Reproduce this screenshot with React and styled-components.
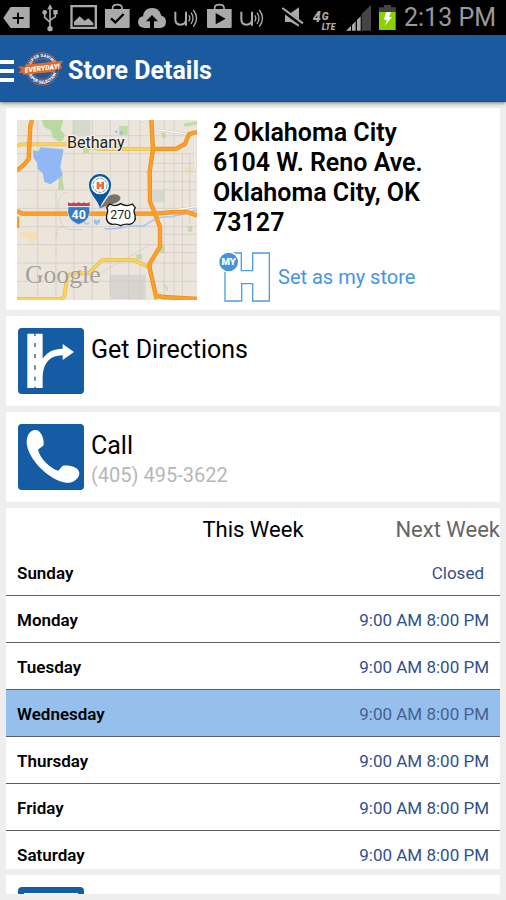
import React, {useState} from 'react';
import styled, {createGlobalStyle} from 'styled-components';

const GlobalStyle = createGlobalStyle`
    * {
        box-sizing: border-box;
    }

    body {
        margin: 0;
        background: #eeeeee;
        font-family: Roboto, "Liberation Sans", sans-serif;
        color: #000000;
    }

    button {
        margin: 0;
        padding: 0;
        border: none;
        background: none;
        font-family: inherit;
        cursor: pointer;
    }
`;

const Page = styled.div`
    display: flex;
    flex-direction: column;
    height: 100vh;
    overflow: hidden;
`;

const StatusBar = styled.div`
    flex: none;
    display: flex;
    align-items: center;
    gap: 8px;
    height: 35px;
    padding: 0 10px 0 3px;
    background: #000000;
    color: #a9aba9;
`;

const StatusIcon = styled.svg`
    flex: none;
    width: ${(props) => props.$width}px;
    height: 35px;
    fill: currentColor;
    margin-left: ${(props) => (props.$push ? 'auto' : '0')};
`;

const Clock = styled.time`
    font-size: 25px;
    line-height: 35px;
    color: #999999;
`;

const AppHeader = styled.header`
    flex: none;
    position: relative;
    display: flex;
    align-items: center;
    height: 67px;
    padding-top: 5px;
    background: #1c5aa0;
    border-bottom: 1px solid #0f4f9c;
    box-shadow: 0 1px 4px rgba(0, 0, 0, 0.5);
    color: #ffffff;
`;

const MenuButton = styled.button`
    display: flex;
    flex-direction: column;
    gap: 5px;
    width: 14px;
`;

const MenuBar = styled.span`
    height: 4px;
    background: #ffffff;
`;

const HeaderLogo = styled.svg`
    width: 46px;
    height: 36px;
    margin: 0 4px 4px;
`;

const Title = styled.h1`
    margin: 0;
    font-size: 25px;
    line-height: 30px;
    font-weight: 700;
`;

const Content = styled.main`
    flex: 1;
    min-height: 0;
    display: flex;
    flex-direction: column;
    gap: 6px;
    padding: 6px;
`;

const Card = styled.section`
    flex: none;
    background: #ffffff;
`;

const StoreCard = styled(Card)`
    display: flex;
    gap: 16px;
    padding: 10px 11px 8px;
`;

const Map = styled.svg`
    flex: none;
    width: 180px;
    height: 180px;
    margin-top: 2px;
`;

const StoreInfo = styled.div`
    flex: 1;
    min-width: 0;
`;

const Address = styled.address`
    max-width: 240px;
    margin-bottom: 14px;
    font-size: 25px;
    line-height: 30px;
    font-style: normal;
    font-weight: 600;
`;

const SetStoreButton = styled.button`
    display: flex;
    align-items: center;
    gap: 8px;
    margin-left: 6px;
    font-size: 20px;
    line-height: 24px;
    color: #4595df;
`;

const StoreIcon = styled.svg`
    width: 51px;
    height: 50px;
`;

const ActionCard = styled(Card)`
    padding: 12px;
`;

const LastCard = styled(Card)`
    flex: 0 1 90px;
    min-height: 0;
    padding: 12px 12px 0;
    overflow: hidden;
`;

const ActionLink = styled.a`
    display: flex;
    gap: 7px;
    color: inherit;
    text-decoration: none;
`;

const ActionIcon = styled.svg`
    flex: none;
    width: 66px;
    height: 66px;
`;

const ActionText = styled.div`
    padding-top: 7px;
`;

const ActionTitle = styled.div`
    font-size: 25px;
    line-height: 30px;
`;

const ActionDetail = styled.div`
    font-size: 20px;
    line-height: 28px;
    color: #b7b7b7;
`;

const WeekTabs = styled.div`
    display: grid;
    grid-template-columns: 1fr auto 1fr;
    height: 41px;
    padding-top: 2px;
`;

const WeekTab = styled.button`
    grid-column: ${(props) => props.$column};
    justify-self: end;
    font-size: 22px;
    line-height: 28px;
    color: ${(props) => (props.$active ? '#000000' : '#666666')};
`;

const HoursTable = styled.table`
    width: 100%;
    border-spacing: 0;
    font-size: 17px;
    line-height: 22px;
`;

const HoursRow = styled.tr`
    background: ${(props) => (props.$today ? '#95bfec' : 'transparent')};
    color: ${(props) => (props.$today ? '#466191' : '#30508c')};

    th, td {
        padding: 13px 11px 11px;
        border-bottom: 1px solid #596066;
    }

    &:last-child th, &:last-child td {
        padding-bottom: 3px;
        border-bottom: none;
    }
`;

const Day = styled.th`
    text-align: left;
    font-weight: 600;
    color: #000000;
`;

const Hours = styled.td`
    text-align: right;

    && {
        padding-right: ${(props) => (props.$closed ? '16px' : '11px')};
    }
`;

const OPEN_HOURS = '9:00 AM 8:00 PM';

const week = [
    {day: 'Sunday', hours: 'Closed'},
    {day: 'Monday', hours: OPEN_HOURS},
    {day: 'Tuesday', hours: OPEN_HOURS},
    {day: 'Wednesday', hours: OPEN_HOURS, today: true},
    {day: 'Thursday', hours: OPEN_HOURS},
    {day: 'Friday', hours: OPEN_HOURS},
    {day: 'Saturday', hours: OPEN_HOURS}
];

const SoundIcon = () => (
    <StatusIcon $width={25} viewBox="519 0 75 105" aria-hidden="true">
        <g fill="none" stroke="currentColor" strokeWidth="6">
            <path d="M523 35 V58 Q523 74 538 74 Q555 74 555 58 V35 M555 55 V77" />
            <path d="M563 46 Q570 54 563 64 M570 38 Q582 54 570 72 M577 30 Q596 54 577 80" strokeWidth="4" />
        </g>
    </StatusIcon>
);

const StatusIcons = () => (
    <>
        <StatusIcon $width={27} viewBox="9 0 81 105" aria-hidden="true">
            <path d="M10 54 L32 21 H89 V84 H32Z" />
            <path d="M54 38 V71 M38 54 H71" stroke="#000000" strokeWidth="6" />
        </StatusIcon>
        <StatusIcon $width={24} viewBox="114 0 72 105" aria-hidden="true">
            <path d="M150 22 V86 M134 40 V52 L150 67 M166 40 V50 L150 61" fill="none" stroke="currentColor" strokeWidth="5" />
            <path d="M150 12 L158 28 H142Z" />
            <circle cx="150" cy="86" r="8" />
            <circle cx="134" cy="37" r="7" />
            <rect x="160" y="30" width="13" height="13" />
        </StatusIcon>
        <StatusIcon $width={27} viewBox="210 0 81 105" aria-hidden="true">
            <path d="M211 15 H291 V87 H211Z M218 22 V80 H284 V22Z" fillRule="evenodd" />
            <path d="M222 76 V65 L239 49 L254 62 L265 55 L280 69 V76Z" />
        </StatusIcon>
        <StatusIcon $width={25} viewBox="315 0 75 105" aria-hidden="true">
            <path d="M315 27 H389 V80 Q389 84 385 84 H319 Q315 84 315 80Z" />
            <path d="M338 30 V22 Q340 14 352 14 Q364 14 366 22 V30" fill="none" stroke="currentColor" strokeWidth="5" />
            <path d="M333 55 L346 67 L371 42" fill="none" stroke="#000000" strokeWidth="7" />
        </StatusIcon>
        <StatusIcon $width={28} viewBox="411 0 84 105" aria-hidden="true">
            <path d="M430 84 Q411 82 411 67 Q411 52 426 49 Q429 24 454 24 Q476 24 481 47 Q495 50 495 66 Q495 82 479 84Z" />
            <path d="M453 45 L471 64 H459 V86 H447 V64 H435Z" fill="#000000" />
        </StatusIcon>
        <SoundIcon />
        <StatusIcon $width={25} viewBox="618 0 75 105" aria-hidden="true">
            <path d="M618 27 H692 V80 Q692 84 688 84 H622 Q618 84 618 80Z" />
            <path d="M641 30 V22 Q643 14 655 14 Q667 14 669 22 V30" fill="none" stroke="currentColor" strokeWidth="5" />
            <path d="M644 39 L674 56 L644 73Z" fill="#000000" />
        </StatusIcon>
        <SoundIcon />
        <StatusIcon $push $width={24} viewBox="87 0 72 105" aria-hidden="true">
            <path d="M99 39 H116 L141 22 V80 L116 66 H99Z" />
            <path d="M92 30 L154 76" stroke="#000000" strokeWidth="13" />
            <path d="M91 24 L153 70" stroke="currentColor" strokeWidth="6" />
        </StatusIcon>
        <StatusIcon $width={25} viewBox="183 0 75 105" role="img" aria-label="4G LTE">
            <g fontFamily="Roboto, sans-serif" fontWeight="900" fontStyle="italic">
                <text x="182" y="65" fontSize="43">4</text>
                <text x="209" y="60" fontSize="31">G</text>
                <text x="209" y="90" fontSize="26">LTE</text>
            </g>
        </StatusIcon>
        <StatusIcon $width={25} viewBox="282 0 75 105" aria-hidden="true">
            <path d="M329 42 L357 15 V92 H329Z" fill="#454545" />
            <path d="M282 92 L297 77 V92Z M300 75 L311 64 V92 H300Z M315 60 L326 49 V92 H315Z" />
        </StatusIcon>
        <StatusIcon $width={17} viewBox="381 0 51 105" aria-hidden="true">
            <path d="M381 22 H396 V15 H417 V22 H431 V36 H381Z" fill="#454545" />
            <path d="M381 36 H431 V90 H381Z" fill="#8bd000" />
            <path d="M402 37 H417 L411 51 H420 L398 78 L405 59 H395Z" fill="#ffffff" />
        </StatusIcon>
    </>
);

const EverydayLogo = () => (
    <HeaderLogo viewBox="53 151 138 108" role="img" aria-label="Super savings everyday, super selection">
        <defs>
            <path id="logo-top" d="M90 205 A36 36 0 0 1 162 205" />
            <path id="logo-bottom" d="M82 205 A44 44 0 0 0 170 205" />
        </defs>
        <circle cx="126" cy="205" r="49" fill="#1c5aa0" stroke="#b85c38" strokeWidth="3" />
        <circle cx="126" cy="205" r="31" fill="none" stroke="#b85c38" strokeWidth="3" />
        <g fill="#ffffff" fontFamily="Roboto, sans-serif" fontWeight="900" fontSize="13" textAnchor="middle">
            <text><textPath href="#logo-top" startOffset="50%">SUPER SAVINGS</textPath></text>
            <text><textPath href="#logo-bottom" startOffset="50%">SUPER SELECTION</textPath></text>
        </g>
        <path d="M53 197 L77 198 L73 192 L189 180 L181 192 L186 202 L166 207 L165 213 L68 222 L68 217 L54 217 L63 207Z" fill="#dd692c" />
        <text
            x="126"
            y="210"
            textAnchor="middle"
            fontFamily="Roboto, sans-serif"
            fontStyle="italic"
            fontWeight="900"
            fontSize="21"
            fill="#ffffff"
            transform="rotate(-7 126 205)"
        >
            EVERYDAY!
        </text>
    </HeaderLogo>
);

const StoreMap = () => (
    <Map viewBox="51 60 540 540" role="img" aria-label="Map of the store near Bethany">
        <rect x="51" y="60" width="540" height="540" fill="#ece5dc" />
        {/* parks and built-up blocks */}
        <path d="M124 60 H190 L182 90 L193 102 L190 120 L178 126 L158 112 L153 92 L132 80Z M178 220 H188 V245 L193 269 H174Z M100 148 L112 158 L110 182 L99 172Z" fill="#b9d9a0" />
        <path d="M357 79 L383 77 V104 H358Z M550 70 L591 64 V74 L555 80Z M483 100 L494 97 L500 110 L488 116Z M249 147 H268 V160 H249Z M409 463 H426 V478 H409Z M480 435 H494 V459 H480Z M563 380 L577 377 V395 H565Z M486 547 L503 562 V575Z" fill="#bfdca5" />
        <path d="M217 60 H271 V104 H217Z M457 271 H492 V307 H457Z" fill="#d5dacd" />
        <path d="M329 524 H437 V598 H340 L329 585Z" fill="#d8d5d0" />
        <path d="M61 395 H112 V417 H100 V430 H88 V412 H61Z M554 202 H580 V215 H554Z" fill="#f5deb1" />
        <path d="M468 350 H523 V370 L495 378 L475 368Z" fill="#efe6e2" />
        {/* local street grid */}
        <g fill="none" stroke="#d0c9c1" strokeWidth="2">
            <path d="M51 107 H591 M51 161 H591 M51 215 H591 M51 270 H591 M51 325 H591 M51 380 H591 M51 434 H591 M51 489 H591 M51 544 H591" />
            <path d="M113 60 V600 M168 270 V600 M222 60 V600 M277 60 V600 M331 60 V600 M386 60 V600 M420 60 V600 M493 60 V600 M522 60 V600 M547 160 V600 M569 160 V370" />
            <path d="M170 410 Q168 380 190 380 M203 276 Q175 280 174 320 Q180 390 207 389 H249 M303 518 L450 435 M450 190 H591 M450 245 H591 M475 403 H591 M470 458 H591" />
        </g>
        <path d="M427 60 Q454 74 470 89 L566 103 L591 96 M585 105 V200 L591 206 M536 328 L591 319" fill="none" stroke="#c5c1bb" strokeWidth="7" />
        <path d="M427 60 Q454 74 470 89 L566 103 L591 96 M585 105 V200 L591 206 M536 328 L591 319" fill="none" stroke="#ffffff" strokeWidth="4" />
        {/* lake and river */}
        <path d="M121 142 L191 148 L181 200 L188 224 L170 240 L151 253 L133 245 L128 220 L114 208 L111 188 L101 174 L100 151 L116 154Z" fill="#91b7f5" />
        <path d="M283 357 L292 362 L299 356 L300 367 L290 376 L281 368Z M359 94 H368 V104 H359Z M344 94 L352 90 V102Z" fill="#9bbdf4" />
        <path d="M248 354 Q252 378 268 369 M313 386 Q350 390 385 378 L432 378 Q475 346 510 351 L555 341 L591 330" fill="none" stroke="#a7c6f4" strokeWidth="5" />
        {/* main roads */}
        <g fill="none" strokeLinejoin="round">
            <path d="M51 138 L64 133 H198 L300 147 H455 M51 597 H180 L193 590 L202 526 L220 520 H266 L306 480 H401 L448 502" stroke="#e3b044" strokeWidth="11" />
            <path d="M51 138 L64 133 H198 L300 147 H455 M51 597 H180 L193 590 L202 526 L220 520 H266 L306 480 H401 L448 502" stroke="#fcd454" strokeWidth="8" />
            <path d="M96 60 L91 78 L86 176 L76 190 L51 212 M51 333 L67 341 H466 L510 337 L560 336 L591 346 M454 60 L459 148 L449 215 L450 305 L465 341 L480 382 V440 L449 491 V505 L470 597 M455 147 L529 146 L555 132 L567 102 L591 96 M465 584 L488 591 L591 597 M51 350 V383" stroke="#e38c20" strokeWidth="13" />
            <path d="M96 60 L91 78 L86 176 L76 190 L51 212 M51 333 L67 341 H466 L510 337 L560 336 L591 346 M454 60 L459 148 L449 215 L450 305 L465 341 L480 382 V440 L449 491 V505 L470 597 M455 147 L529 146 L555 132 L567 102 L591 96 M465 584 L488 591 L591 597 M51 350 V383" stroke="#ff9f27" strokeWidth="9" />
        </g>
        <text x="201" y="143" fontFamily="Roboto, sans-serif" fontSize="48" fill="#222222" stroke="#f5f1eb" strokeWidth="7" paintOrder="stroke">Bethany</text>
        <text x="75" y="548" fontFamily="Liberation Serif, serif" fontSize="77" fill="#a39f9a" stroke="#f5f1eb" strokeWidth="2" paintOrder="stroke">Google</text>
        {/* interstate shield */}
        <path d="M204 320 H269 Q276 360 236 374 Q197 360 204 320Z" fill="#347ac8" stroke="#ffffff" strokeWidth="2" />
        <path d="M204 306 Q213 313 221 307 Q229 313 236 306 Q244 313 252 307 Q260 313 269 306 V318 H204Z" fill="#c8404a" />
        <text x="236" y="356" textAnchor="middle" fontFamily="Roboto, sans-serif" fontWeight="700" fontSize="37" fill="#ffffff">40</text>
        {/* store pin with its shadow */}
        <path d="M300 325 L326 288 Q347 277 361 290 Q365 306 335 313Z" fill="#5d5751" opacity="0.8" />
        <path d="M300 326 C295 300 267 282 267 255 A33 33 0 0 1 333 255 C333 282 305 300 300 326Z" fill="#0b57a0" />
        <circle cx="300" cy="256" r="27" fill="#ffffff" />
        <circle cx="300" cy="256" r="21" fill="none" stroke="#1c66a8" strokeWidth="2" strokeDasharray="11 3" />
        <path d="M290 245 H298 V253 H304 V245 H312 V268 H304 V260 H298 V268 H290Z" fill="#f36b20" />
        {/* US route shield */}
        <path d="M329 312 Q346 322 362 311 Q380 322 397 312 L406 323 Q399 333 405 345 Q410 368 388 373 Q373 371 362 377 Q351 371 336 373 Q316 368 320 345 Q326 333 320 323Z" fill="#ffffff" stroke="#161616" strokeWidth="4" />
        <text x="362" y="357" textAnchor="middle" fontFamily="Roboto, sans-serif" fontSize="37" fill="#222222">270</text>
    </Map>
);

const MyStoreIcon = () => (
    <StoreIcon viewBox="42 439 153 150" aria-hidden="true">
        <path d="M60 470 V586 H110 V534 H143 V586 H193 V442 H143 V495 H109 V442 H80" fill="none" stroke="#4f9de3" strokeWidth="4" />
        <circle cx="71" cy="469" r="32" fill="#ffffff" />
        <circle cx="71" cy="469" r="28" fill="#4593db" />
        <text x="71" y="479" textAnchor="middle" fontFamily="Roboto, sans-serif" fontWeight="900" fontSize="29" fill="#ffffff">MY</text>
    </StoreIcon>
);

const DirectionsIcon = () => (
    <ActionIcon viewBox="53 55 198 198" aria-hidden="true">
        <rect x="53" y="55" width="198" height="198" rx="11" fill="#165ca5" />
        <path d="M81 72 H127 V147 C140 127 159 117 187 117 V103 L221 127 L187 151 V137 C147 138 129 161 127 200 V235 H81Z" fill="#ffffff" />
        <path d="M104 72 V79 M104 100 V112 M104 133 V146 M104 167 V180 M104 201 V213 M104 231 V235" stroke="#165ca5" strokeWidth="4" />
    </ActionIcon>
);

const PhoneIcon = () => (
    <ActionIcon viewBox="53 342 198 198" aria-hidden="true">
        <rect x="53" y="342" width="198" height="198" rx="11" fill="#165ca5" />
        <path d="M79 397 C79 371 93 359 107 360 C123 362 132 386 130 406 L113 419 C119 445 150 476 174 482 L187 467 C206 464 238 471 237 491 C235 509 215 520 197 518 C146 512 80 445 79 397Z" fill="#ffffff" />
    </ActionIcon>
);

const CalendarIcon = () => (
    <ActionIcon viewBox="0 0 66 66" aria-hidden="true">
        <rect width="66" height="66" rx="4" fill="#165ca5" />
        <rect x="6" y="6" width="54" height="54" fill="#ffffff" />
    </ActionIcon>
);

const App = () => {
    const [activeWeek, setActiveWeek] = useState('this');

    return (
        <Page>
            <GlobalStyle />
            <StatusBar>
                <StatusIcons />
                <Clock>2:13 PM</Clock>
            </StatusBar>
            <AppHeader>
                <MenuButton type="button" aria-label="Menu">
                    <MenuBar />
                    <MenuBar />
                    <MenuBar />
                </MenuButton>
                <EverydayLogo />
                <Title>Store Details</Title>
            </AppHeader>
            <Content>
                <StoreCard>
                    <StoreMap />
                    <StoreInfo>
                        <Address>
                            2 Oklahoma City
                            <br />
                            6104 W. Reno Ave.
                            <br />
                            Oklahoma City, OK 73127
                        </Address>
                        <SetStoreButton type="button">
                            <MyStoreIcon />
                            Set as my store
                        </SetStoreButton>
                    </StoreInfo>
                </StoreCard>
                <ActionCard>
                    <ActionLink href="#directions">
                        <DirectionsIcon />
                        <ActionText>
                            <ActionTitle>Get Directions</ActionTitle>
                        </ActionText>
                    </ActionLink>
                </ActionCard>
                <ActionCard>
                    <ActionLink href="tel:4054953622">
                        <PhoneIcon />
                        <ActionText>
                            <ActionTitle>Call</ActionTitle>
                            <ActionDetail>(405) 495-3622</ActionDetail>
                        </ActionText>
                    </ActionLink>
                </ActionCard>
                <Card>
                    <WeekTabs>
                        <WeekTab type="button" $column={2} $active={activeWeek === 'this'} onClick={() => setActiveWeek('this')}>
                            This Week
                        </WeekTab>
                        <WeekTab type="button" $column={3} $active={activeWeek === 'next'} onClick={() => setActiveWeek('next')}>
                            Next Week
                        </WeekTab>
                    </WeekTabs>
                    <HoursTable>
                        <tbody>
                            {week.map(({day, hours, today}) => (
                                <HoursRow key={day} $today={today}>
                                    <Day scope="row">{day}</Day>
                                    <Hours $closed={hours === 'Closed'}>{hours}</Hours>
                                </HoursRow>
                            ))}
                        </tbody>
                    </HoursTable>
                </Card>
                <LastCard>
                    <CalendarIcon />
                </LastCard>
            </Content>
        </Page>
    );
};

export default App;
